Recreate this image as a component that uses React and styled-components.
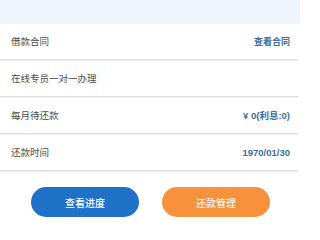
import React from "react";
import styled, { createGlobalStyle } from "styled-components";

const Global = createGlobalStyle`
  html, body { margin: 0; padding: 0; background: #fff; }
  body { font-family: "Noto Sans CJK SC", "Liberation Sans", sans-serif; }
`;

const Page = styled.div`
  width: 300px;
  height: 230px;
  background: #fff;
  display: flex;
  flex-direction: column;
  overflow: hidden;
`;

const TopBand = styled.div`
  height: 24px;
  background: #eef5fc;
  flex: none;
`;

const List = styled.div`
  display: flex;
  flex-direction: column;
  width: 298px;
`;

const Row = styled.div`
  height: 35px;
  display: flex;
  align-items: center;
  justify-content: space-between;
  padding: 0 8px 0 11px;
  border-bottom: 1px solid #dedede;
  box-shadow: 0 1px 0 #eeeeee;
  margin-bottom: 1px;
`;

const Label = styled.span`
  font-size: 9.5px;
  color: #4a4a4a;
  line-height: 1;
`;

const Value = styled.span`
  font-family: ${(p) => (p.$latin ? '"Liberation Sans", "Noto Sans CJK SC", sans-serif' : '"Noto Sans CJK SC", sans-serif')};
  font-size: ${(p) => (p.$latin ? "9.5px" : "9px")};
  font-weight: 700;
  color: #3e6e9c;
  line-height: 1;
`;

const Actions = styled.div`
  display: flex;
  justify-content: center;
  gap: 23px;
  padding-top: 15px;
  padding-left: 1px;
`;

const Button = styled.button`
  width: 108px;
  height: 30px;
  border: none;
  border-radius: 15px;
  background: ${(p) => p.$bg};
  color: ${(p) => p.$fg};
  font-family: "Noto Sans CJK SC", sans-serif;
  font-size: 10px;
  font-weight: 500;
  padding: 0;
  display: flex;
  align-items: center;
  justify-content: center;
`;

const rows = [
  { label: "借款合同", value: "查看合同" },
  { label: "在线专员一对一办理", value: "" },
  { label: "每月待还款", value: "¥ 0(利息:0)", latin: true },
  { label: "还款时间", value: "1970/01/30", latin: true },
];

export default function App() {
  return (
    <Page>
      <Global />
      <TopBand />
      <List>
        {rows.map((r) => (
          <Row key={r.label}>
            <Label>{r.label}</Label>
            {r.value && <Value $latin={r.latin}>{r.value}</Value>}
          </Row>
        ))}
      </List>
      <Actions>
        <Button $bg="#1f72c8" $fg="#ffffff">查看进度</Button>
        <Button $bg="#f7913c" $fg="#fdf1e4">还款管理</Button>
      </Actions>
    </Page>
  );
}
